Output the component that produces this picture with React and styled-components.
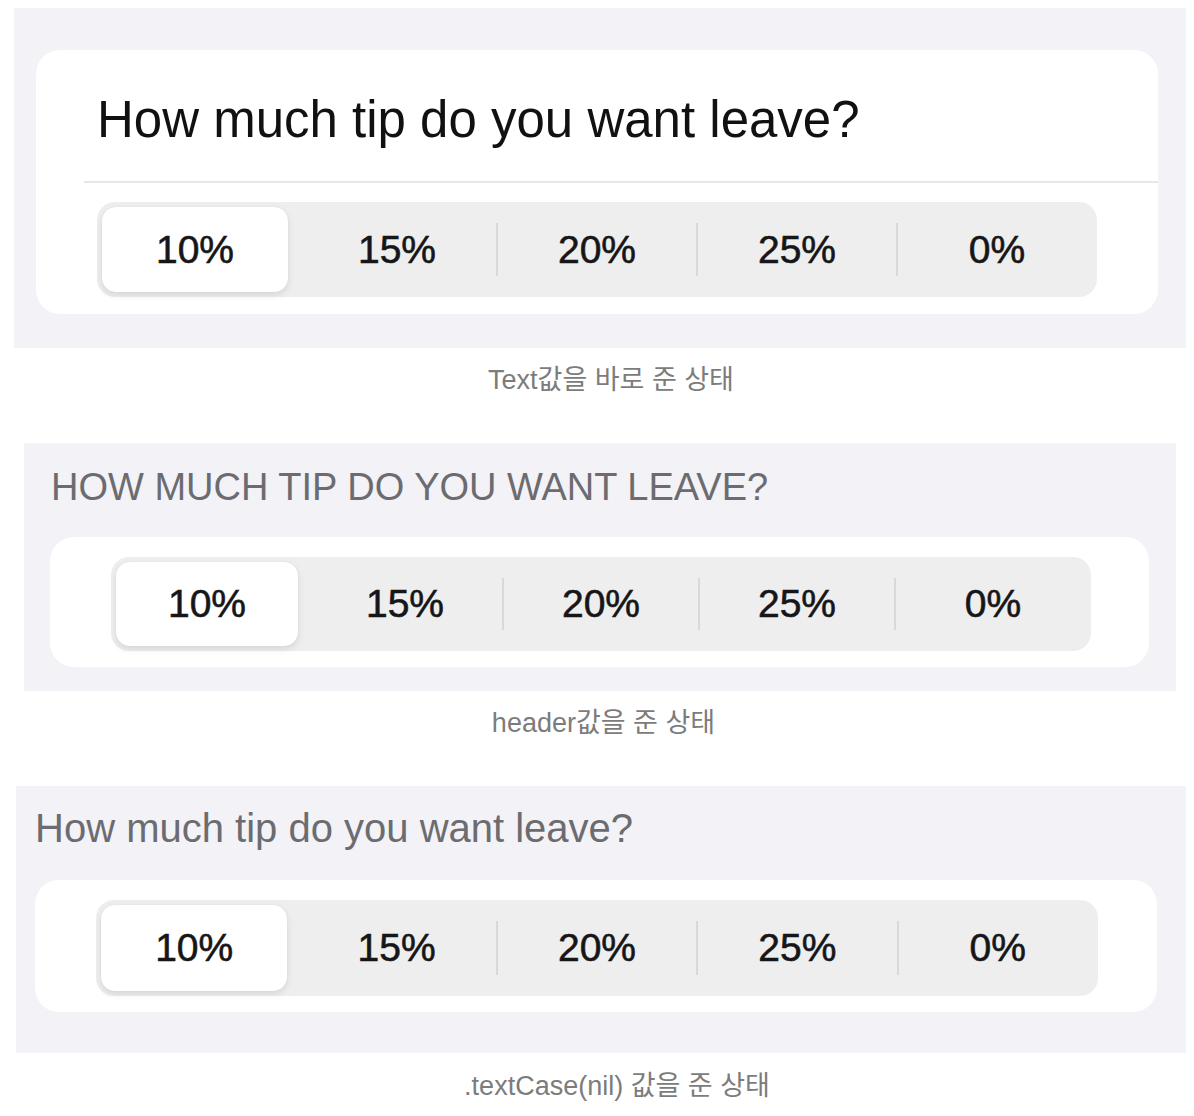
import React from 'react';
import styled, { createGlobalStyle } from 'styled-components';

const GlobalStyle = createGlobalStyle`
  body {
    margin: 0;
    background: #ffffff;
    font-family: "Liberation Sans", "Noto Sans CJK KR", sans-serif;
  }
`;

const Page = styled.div`
  display: flex;
  flex-direction: column;
  padding-top: 8px;
`;

const Panel = styled.section`
  display: flex;
  flex-direction: column;
  background: #f2f2f7;
  margin: 0 ${(p) => p.$right}px 0 ${(p) => p.$left}px;
  padding: ${(p) => p.$pad};
`;

const Card = styled.div`
  display: flex;
  flex-direction: column;
  background: #ffffff;
  border-radius: 24px;
`;

const CardTitle = styled.h2`
  margin: 0;
  padding: 40px 0 32px 61px;
  font-size: 51px;
  font-weight: 400;
  line-height: normal;
  color: #111113;
`;

const Rule = styled.div`
  height: 2px;
  margin-left: 48px;
  background: #e7e7ea;
`;

const SegWrap = styled.div`
  padding: ${(p) => p.$pad};
`;

const SectionHeader = styled.h3`
  margin: 0 0 ${(p) => p.$gap}px;
  padding-left: ${(p) => p.$indent}px;
  font-size: ${(p) => p.$size}px;
  font-weight: 400;
  line-height: normal;
  color: #6c6c70;
  text-transform: ${(p) => (p.$upper ? 'uppercase' : 'none')};
`;

const Segmented = styled.div`
  display: grid;
  grid-template-columns: repeat(5, 1fr);
  height: ${(p) => p.$height}px;
  background: #eeeeef;
  border-radius: 18px;
`;

const Segment = styled.div`
  position: relative;
  display: flex;
  align-items: center;
  justify-content: center;
  font-size: 39px;
  color: #161618;
  -webkit-text-stroke: 0.6px #161618;
  margin: ${(p) => (p.$selected ? '5px 9px 5px 5px' : '0')};
  background: ${(p) => (p.$selected ? '#ffffff' : 'transparent')};
  border-radius: 14px;
  box-shadow: ${(p) =>
    p.$selected ? '0 3px 7px rgba(0,0,0,0.10), 0 0 1px rgba(0,0,0,0.10)' : 'none'};

  &::before {
    content: '';
    display: ${(p) => (p.$sep ? 'block' : 'none')};
    position: absolute;
    left: -1px;
    top: 22%;
    bottom: 22%;
    width: 2px;
    background: #d9d9dc;
  }
`;

const Caption = styled.p`
  margin: ${(p) => p.$top}px 0 45px;
  padding-left: ${(p) => p.$shift}px;
  text-align: center;
  font-size: 27px;
  line-height: 36px;
  color: #7c7c7c;
`;

const tips = ['10%', '15%', '20%', '25%', '0%'];

const TipPicker = ({ height }) => (
  <Segmented $height={height}>
    {tips.map((t, i) => (
      <Segment key={t} $selected={i === 0} $sep={i > 1}>
        {t}
      </Segment>
    ))}
  </Segmented>
);

const question = 'How much tip do you want leave?';

export default function App() {
  return (
    <>
      <GlobalStyle />
      <Page>
        <Panel $left={14} $right={8} $pad="42px 28px 34px 22px">
          <Card>
            <CardTitle>{question}</CardTitle>
            <Rule />
            <SegWrap $pad="19px 61px 17px 61px">
              <TipPicker height={95} />
            </SegWrap>
          </Card>
        </Panel>
        <Caption $top={14} $shift={28}>Text값을 바로 준 상태</Caption>

        <Panel $left={24} $right={18} $pad="23px 27px 24px 26px">
          <SectionHeader $indent={1} $size={38} $gap={28} $upper>
            {question}
          </SectionHeader>
          <Card>
            <SegWrap $pad="20px 58px 16px 61px">
              <TipPicker height={94} />
            </SegWrap>
          </Card>
        </Panel>
        <Caption $top={14} $shift={13}>header값을 준 상태</Caption>

        <Panel $left={16} $right={8} $pad="20px 29px 41px 19px">
          <SectionHeader $indent={0} $size={40} $gap={29}>
            {question}
          </SectionHeader>
          <Card>
            <SegWrap $pad="20px 59px 16px 61px">
              <TipPicker height={96} />
            </SegWrap>
          </Card>
        </Panel>
        <Caption $top={15} $shift={40}>.textCase(nil) 값을 준 상태</Caption>
      </Page>
    </>
  );
}
